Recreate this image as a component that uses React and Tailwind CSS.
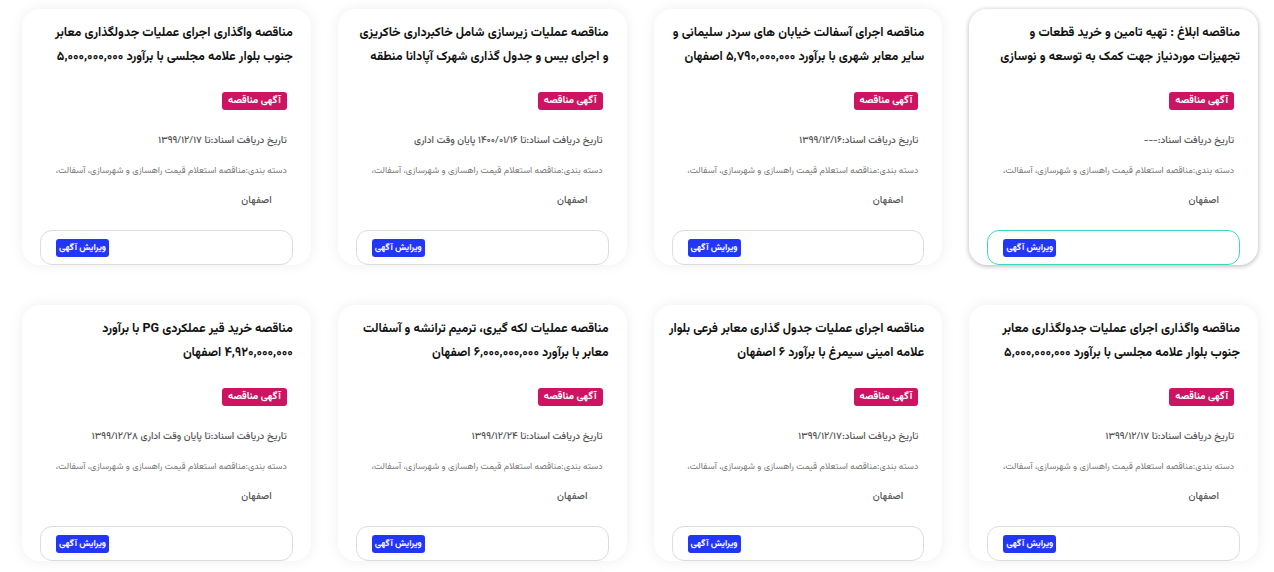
import React from "react";

const tenders = [
  {
    title: ["مناقصه ابلاغ : تهیه تامین و خرید قطعات و", "تجهیزات موردنیاز جهت کمک به توسعه و نوسازی"],
    date: "تاریخ دریافت اسناد:---",
    active: true,
  },
  {
    title: ["مناقصه اجرای آسفالت خیابان های سردر سلیمانی و", "سایر معابر شهری با برآورد ۵,۷۹۰,۰۰۰,۰۰۰ اصفهان"],
    date: "تاریخ دریافت اسناد:۱۳۹۹/۱۲/۱۶",
  },
  {
    title: ["مناقصه عملیات زیرسازی شامل خاکبرداری خاکریزی", "و اجرای بیس و جدول گذاری شهرک آپادانا منطقه"],
    date: "تاریخ دریافت اسناد:تا ۱۴۰۰/۰۱/۱۶ پایان وقت اداری",
  },
  {
    title: ["مناقصه واگذاری اجرای عملیات جدولگذاری معابر", "جنوب بلوار علامه مجلسی با برآورد ۵,۰۰۰,۰۰۰,۰۰۰"],
    date: "تاریخ دریافت اسناد:تا ۱۳۹۹/۱۲/۱۷",
  },
  {
    title: ["مناقصه واگذاری اجرای عملیات جدولگذاری معابر", "جنوب بلوار علامه مجلسی با برآورد ۵,۰۰۰,۰۰۰,۰۰۰"],
    date: "تاریخ دریافت اسناد:تا ۱۳۹۹/۱۲/۱۷",
  },
  {
    title: ["مناقصه اجرای عملیات جدول گذاری معابر فرعی بلوار", "علامه امینی سیمرغ با برآورد ۶ اصفهان"],
    date: "تاریخ دریافت اسناد:۱۳۹۹/۱۲/۱۷",
  },
  {
    title: ["مناقصه عملیات لکه گیری، ترمیم ترانشه و آسفالت", "معابر با برآورد ۶,۰۰۰,۰۰۰,۰۰۰ اصفهان"],
    date: "تاریخ دریافت اسناد:تا ۱۳۹۹/۱۲/۲۴",
  },
  {
    title: ["مناقصه خرید قیر عملکردی PG با برآورد", "۴,۹۲۰,۰۰۰,۰۰۰ اصفهان"],
    date: "تاریخ دریافت اسناد:تا پایان وقت اداری ۱۳۹۹/۱۲/۲۸",
  },
];

function TenderCard({ tender }) {
  return (
    <div
      className={`bg-white rounded-[18px] h-[256px] flex flex-col ${
        tender.active
          ? "shadow-[0_1px_5px_rgba(0,0,0,0.3)]"
          : "shadow-[0_0_14px_rgba(0,0,0,0.07)]"
      }`}
    >
      <h3 className="pr-[18px] pt-[12px] h-[60px] text-[12.5px] leading-[24px] font-bold text-[#111]">
        {tender.title.map((line, i) => (
          <span key={i} className="block whitespace-nowrap">
            {line}
          </span>
        ))}
      </h3>
      <div className="flex pr-[24px] mt-[23px]">
        <span className="bg-[#cc1462] text-white text-[10px] font-bold leading-[18px] h-[18px] px-[6px] rounded-[3px]">
          آگهی مناقصه
        </span>
      </div>
      <div className="pr-[24px] mt-[21px] text-[9.8px] leading-[20px] text-[#555] font-medium whitespace-nowrap">
        {tender.date}
      </div>
      <div className="pr-[24px] mt-[10px] text-[9px] leading-[20px] text-[#777] whitespace-nowrap">
        دسته بندی:مناقصه استعلام قیمت راهسازی و شهرسازی، آسفالت،
      </div>
      <div className="pr-[39px] mt-[10px] text-[10px] leading-[20px] text-[#555] font-medium">
        اصفهان
      </div>
      <div
        className={`mx-[18px] mt-[19px] h-[35px] rounded-[12px] border flex items-center justify-end pl-[15px] ${
          tender.active ? "border-[#3dd6c2]" : "border-[#dcdcdc]"
        }`}
      >
        <button className="bg-[#2236f5] text-white text-[9px] font-bold leading-[18px] h-[18px] px-[3px] rounded-[3px]">
          ویرایش آگهی
        </button>
      </div>
    </div>
  );
}

export default function App() {
  return (
    <div
      dir="rtl"
      className="min-h-screen bg-white pt-[9px] pr-[16px] pl-[22px] font-['Vazirmatn','Noto_Sans_Arabic','DejaVu_Sans',sans-serif]"
    >
      <div className="grid grid-cols-4 gap-x-[27px] gap-y-[40px]">
        {tenders.map((t, i) => (
          <TenderCard key={i} tender={t} />
        ))}
      </div>
    </div>
  );
}
